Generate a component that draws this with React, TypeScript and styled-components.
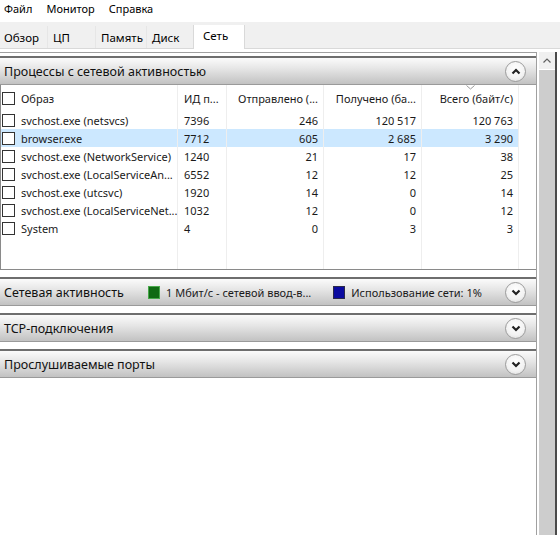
import React from 'react';
import styled, { createGlobalStyle } from 'styled-components';

const GlobalStyle = createGlobalStyle`
  html, body {
    margin: 0;
    padding: 0;
    background: #ffffff;
  }
  body {
    font-family: "Noto Sans", "Open Sans", Arial, sans-serif;
    color: #000;
    width: 560px;
    height: 535px;
    overflow: hidden;
  }
`;

const Window = styled.div`
  display: flex;
  flex-direction: column;
  width: 560px;
  height: 535px;
`;

const MenuBar = styled.div`
  display: flex;
  align-items: center;
  height: 22px;
  padding-left: 4px;
  gap: 14px;
  font-size: 11px;
`;

const MenuItem = styled.span`
  line-height: 1;
  margin-top: -6px;
`;

const TabBar = styled.div`
  display: flex;
  align-items: flex-end;
  height: 26px;
  background: #f0f0f0;
  border-bottom: 1px solid #d9d9d9;
`;

const Tab = styled.div<{ $w: number; $active?: boolean }>`
  width: ${p => p.$w}px;
  box-sizing: border-box;
  height: ${p => (p.$active ? 24 : 22)}px;
  display: flex;
  align-items: center;
  padding-left: ${p => (p.$active ? 9 : 5)}px;
  font-size: 11.5px;
  background: ${p => (p.$active ? '#ffffff' : 'transparent')};
  border-left: 1px solid ${p => (p.$active ? '#d9d9d9' : '#e6e6e6')};
  border-right: ${p => (p.$active ? '1px solid #d9d9d9' : 'none')};
  margin-bottom: ${p => (p.$active ? -1 : 0)}px;
  padding-bottom: ${p => (p.$active ? 4 : 0)}px;
  &:first-child {
    border-left: none;
    padding-left: 4px;
  }
`;

const Body = styled.div`
  flex: 1;
  display: flex;
  padding-top: 3px;
  min-height: 0;
`;

const Main = styled.div`
  width: 537px;
  box-sizing: border-box;
  border-top: 1px solid #a0a0a0;
  border-right: 1px solid #a0a0a0;
  display: flex;
  flex-direction: column;
  padding-top: 3px;
  gap: 7px;
`;

const Scrollbar = styled.div`
  width: 18px;
  margin-left: 2px;
  display: flex;
  flex-direction: column;
  border-right: 2px solid #4a4a4a;
  box-sizing: border-box;
`;

const ScrollArrow = styled.div`
  height: 17px;
  display: flex;
  align-items: center;
  justify-content: center;
  background: #f0f0f0;
`;

const ScrollThumb = styled.div`
  flex: 1;
  background: #cdcdcd;
  margin-top: 1px;
`;

const Section = styled.div`
  display: flex;
  flex-direction: column;
`;

const SectionHeader = styled.div`
  height: 29px;
  box-sizing: border-box;
  display: flex;
  align-items: center;
  padding: 0 10px 0 4px;
  border-top: 2px solid #6e6e6e;
  border-bottom: 1px solid #9a9a9a;
  background: linear-gradient(#fbfbfb 0%, #e6e6e6 40%, #c2c2c2 100%);
  font-size: 12.5px;
  color: #111;
`;

const SectionTitle = styled.span<{ $w?: number }>`
  flex: ${p => (p.$w ? `0 0 ${p.$w}px` : '1')};
  white-space: nowrap;
`;

const Spacer = styled.span`
  flex: 1;
`;

const Legend = styled.span`
  display: flex;
  align-items: center;
  gap: 6px;
  font-size: 11px;
  margin-right: 22px;
  white-space: nowrap;
  color: #1a1a1a;
`;

const Swatch = styled.span<{ $c: string; $b: string }>`
  width: 10px;
  height: 11px;
  border: 1px solid ${p => p.$b};
  background: ${p => p.$c};
`;

const ToggleButton = styled.span`
  width: 19px;
  height: 19px;
  border-radius: 50%;
  border: 1px solid #9c9c9c;
  background: radial-gradient(circle at 50% 35%, #ffffff 0%, #f2f2f2 60%, #d8d8d8 100%);
  display: flex;
  align-items: center;
  justify-content: center;
  flex: none;
`;

const Table = styled.div`
  height: 185px;
  box-sizing: border-box;
  border-left: 1px solid #8a8a8a;
  border-bottom: 1px solid #8a8a8a;
  display: flex;
  flex-direction: column;
`;

const cols = '177px 49px 97px 98px 97px';

const Row = styled.div<{ $h: number; $sel?: boolean }>`
  display: grid;
  grid-template-columns: ${cols};
  height: ${p => p.$h}px;
  width: 518px;
  background: ${p => (p.$sel ? '#cce8ff' : 'transparent')};
  font-size: 11px;
  color: #1a1a1a;
`;

const Filler = styled(Row)`
  flex: 1;
`;

const Cell = styled.div<{ $right?: boolean }>`
  display: flex;
  align-items: center;
  justify-content: ${p => (p.$right ? 'flex-end' : 'flex-start')};
  padding: ${p => (p.$right ? '0 5px 0 0' : '0 0 0 6px')};
  border-right: 1px solid #eeeeee;
  white-space: nowrap;
  overflow: hidden;
  position: relative;
`;

const NameCell = styled(Cell)`
  padding-left: 1px;
  gap: 6px;
`;

const Check = styled.span`
  width: 11px;
  height: 11px;
  border: 1px solid #333;
  background: #fff;
  flex: none;
`;

const SortMark = styled.span`
  position: absolute;
  top: 0;
  left: 50%;
  margin-left: -4px;
  line-height: 0;
`;

const Chevron = ({ up }: { up?: boolean }) => (
  <svg width="10" height="7" viewBox="0 0 10 7">
    <path
      d={up ? 'M1.5 5.5 L5 2 L8.5 5.5' : 'M1.5 1.5 L5 5 L8.5 1.5'}
      fill="none"
      stroke="#222"
      strokeWidth="2.2"
    />
  </svg>
);

const rows = [
  ['svchost.exe (netsvcs)', '7396', '246', '120 517', '120 763'],
  ['browser.exe', '7712', '605', '2 685', '3 290'],
  ['svchost.exe (NetworkService)', '1240', '21', '17', '38'],
  ['svchost.exe (LocalServiceAn...', '6552', '12', '12', '25'],
  ['svchost.exe (utcsvc)', '1920', '14', '0', '14'],
  ['svchost.exe (LocalServiceNet...', '1032', '12', '0', '12'],
  ['System', '4', '0', '3', '3'],
];

const tabs = [
  { label: 'Обзор', w: 47 },
  { label: 'ЦП', w: 48 },
  { label: 'Память', w: 51 },
  { label: 'Диск', w: 47 },
  { label: 'Сеть', w: 52, active: true },
];

export default function App() {
  return (
    <Window>
      <GlobalStyle />
      <MenuBar>
        <MenuItem>Файл</MenuItem>
        <MenuItem>Монитор</MenuItem>
        <MenuItem>Справка</MenuItem>
      </MenuBar>
      <TabBar>
        {tabs.map(t => (
          <Tab key={t.label} $w={t.w} $active={t.active}>
            {t.label}
          </Tab>
        ))}
      </TabBar>
      <Body>
        <Main>
          <Section>
            <SectionHeader>
              <SectionTitle>Процессы с сетевой активностью</SectionTitle>
              <ToggleButton>
                <Chevron up />
              </ToggleButton>
            </SectionHeader>
            <Table>
              <Row $h={26}>
                <NameCell>
                  <Check />
                  Образ
                </NameCell>
                <Cell>ИД п...</Cell>
                <Cell $right>Отправлено (...</Cell>
                <Cell $right>Получено (ба...</Cell>
                <Cell $right>
                  <SortMark>
                    <svg width="9" height="5" viewBox="0 0 9 5">
                      <path d="M0.5 0.5 L4.5 4 L8.5 0.5" fill="none" stroke="#9a9a9a" strokeWidth="1" />
                    </svg>
                  </SortMark>
                  Всего (байт/с)
                </Cell>
              </Row>
              {rows.map((r, i) => (
                <Row key={r[0]} $h={18} $sel={i === 1}>
                  <NameCell>
                    <Check />
                    {r[0]}
                  </NameCell>
                  <Cell>{r[1]}</Cell>
                  <Cell $right>{r[2]}</Cell>
                  <Cell $right>{r[3]}</Cell>
                  <Cell $right>{r[4]}</Cell>
                </Row>
              ))}
              <Filler $h={0}>
                <Cell />
                <Cell />
                <Cell />
                <Cell />
                <Cell />
              </Filler>
            </Table>
          </Section>
          <SectionHeader>
            <SectionTitle $w={144}>Сетевая активность</SectionTitle>
            <Legend>
              <Swatch $c="#0f6a12" $b="#48a84a" />
              1 Мбит/с - сетевой ввод-в...
            </Legend>
            <Legend>
              <Swatch $c="#0a0aa0" $b="#2a2a4a" />
              Использование сети: 1%
            </Legend>
            <Spacer />
            <ToggleButton>
              <Chevron />
            </ToggleButton>
          </SectionHeader>
          <SectionHeader>
            <SectionTitle>TCP-подключения</SectionTitle>
            <ToggleButton>
              <Chevron />
            </ToggleButton>
          </SectionHeader>
          <SectionHeader>
            <SectionTitle>Прослушиваемые порты</SectionTitle>
            <ToggleButton>
              <Chevron />
            </ToggleButton>
          </SectionHeader>
        </Main>
        <Scrollbar>
          <ScrollArrow>
            <svg width="8" height="5" viewBox="0 0 8 5">
              <path d="M0.5 4.5 L4 1 L7.5 4.5" fill="none" stroke="#606060" strokeWidth="1.2" />
            </svg>
          </ScrollArrow>
          <ScrollThumb />
        </Scrollbar>
      </Body>
    </Window>
  );
}
